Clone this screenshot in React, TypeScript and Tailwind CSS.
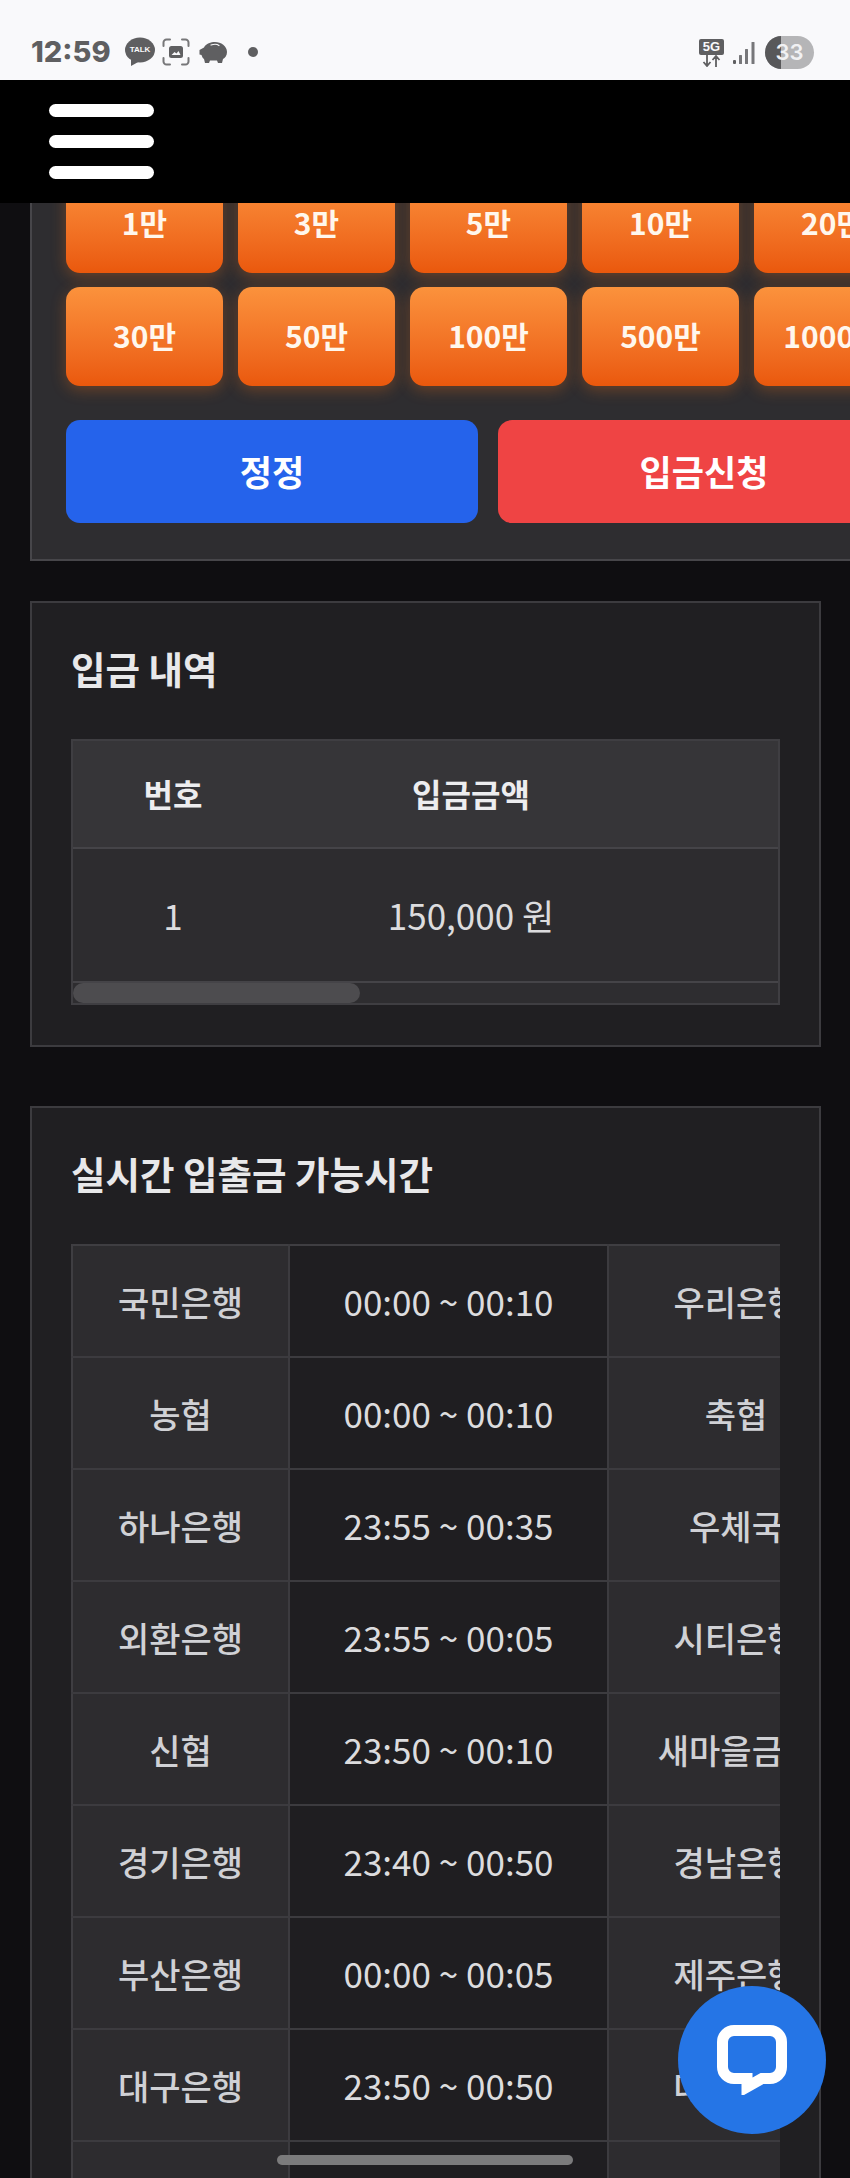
import React from 'react';

const row1 = ['1만', '3만', '5만', '10만', '20만'];
const row2 = ['30만', '50만', '100만', '500만', '1000만'];

const banks = [
  ['국민은행', '00:00 ~ 00:10', '우리은행'],
  ['농협', '00:00 ~ 00:10', '축협'],
  ['하나은행', '23:55 ~ 00:35', '우체국'],
  ['외환은행', '23:55 ~ 00:05', '시티은행'],
  ['신협', '23:50 ~ 00:10', '새마을금고'],
  ['경기은행', '23:40 ~ 00:50', '경남은행'],
  ['부산은행', '00:00 ~ 00:05', '제주은행'],
  ['대구은행', '23:50 ~ 00:50', '대신증권'],
  ['광주은행', '23:50 ~ 00:10', '전북은행'],
];

const StatusBar: React.FC = () => (
  <div className="h-[80px] shrink-0 bg-[#f9f9fb] flex items-start justify-between pt-[36px] pl-[31px] pr-[36px] text-[#5f5f61]">
    <div className="flex items-center">
      <span className="font-['Inter',sans-serif] text-[29px] leading-[32px] font-extrabold w-[94px]">12:59</span>
      {/* kakao talk */}
      <div className="relative w-[30px] h-[30px]">
        <svg viewBox="0 0 30 30" className="w-[30px] h-[30px]">
          <ellipse cx="15" cy="13" rx="15" ry="12.5" fill="#5f5f61" />
          <path d="M6 21 L6 29 L15 24 Z" fill="#5f5f61" />
        </svg>
        <span className="absolute left-0 top-[8px] w-[30px] text-center font-['Liberation_Sans',sans-serif] text-[8px] leading-[10px] font-bold text-[#f9f9fb]">TALK</span>
      </div>
      {/* screenshot */}
      <svg viewBox="0 0 28 28" className="w-[28px] h-[28px] ml-[7px]" fill="none">
        <path d="M1.500 8V4.500a3 3 0 0 1 3-3H8M20 1.500h3.500a3 3 0 0 1 3 3V8M26.500 20v3.500a3 3 0 0 1-3 3H20M8 26.500H4.500a3 3 0 0 1-3-3V20" stroke="#777779" strokeWidth="2" strokeLinecap="round" />
        <rect x="7" y="8" width="14" height="12" rx="2.500" fill="#5f5f61" />
        <path d="M9.500 17l3-3 2 1.500 2-2.500 2 4z" fill="#f9f9fb" />
      </svg>
      {/* piggy */}
      <svg viewBox="0 0 28 22" className="w-[28px] h-[22px] ml-[9px]">
        <path d="M0.500 9 L5 6.500 C7 2.500 12 1 16 1 C22 1 28 5 28 11 C28 14.500 26 17 24 18 L23 22 H19 L18 19.500 H11 L10 22 H6 L5 18 C3.500 17 3 15.500 2.500 14 L0.500 13.500 Z" fill="#5f5f61" />
        <path d="M12 4 C15 3 18 3 20 4.500" stroke="#f9f9fb" strokeWidth="1.200" fill="none" strokeLinecap="round" />
      </svg>
      <span className="w-[10px] h-[10px] rounded-full bg-[#5f5f61] ml-[21px]" />
    </div>
    <div className="flex items-center">
      {/* 5G */}
      <div className="flex flex-col items-center w-[25px]">
        <span className="w-[25px] h-[16px] rounded-[2px] bg-[#5f5f61] text-[#f9f9fb] font-['Liberation_Sans',sans-serif] text-[13px] leading-[16px] font-bold text-center">5G</span>
        <svg viewBox="0 0 25 12" className="w-[25px] h-[12px]" fill="none" stroke="#5f5f61" strokeWidth="1.800">
          <path d="M8 0v10M4.500 7l3.500 4 3.500-4M17 12V2M13.500 5L17 1l3.500 4" />
        </svg>
      </div>
      {/* signal */}
      <svg viewBox="0 0 22 24" className="w-[22px] h-[24px] ml-[9px]" fill="#5f5f61">
        <rect x="0" y="19" width="3" height="4" rx="1" />
        <rect x="6" y="14" width="3" height="9" rx="0.500" fill="#77777a" />
        <rect x="12" y="8" width="3" height="15" rx="0.500" fill="#77777a" />
        <rect x="18.500" y="1" width="3" height="22" rx="0.500" fill="#77777a" />
      </svg>
      {/* battery */}
      <div className="ml-[10px] relative w-[49px] h-[33px] rounded-full overflow-hidden bg-[#b5b5b7] flex items-center justify-center">
        <span className="absolute left-0 top-0 bottom-0 w-[16px] bg-[#58585a]" />
        <span className="relative font-['Inter',sans-serif] text-[22px] leading-[33px] font-semibold text-[#f1f1f3]">33</span>
      </div>
    </div>
  </div>
);

const Header: React.FC = () => (
  <div className="h-[123px] shrink-0 bg-black flex flex-col justify-center gap-[18px] pl-[49px] relative z-10">
    <span className="block w-[105px] h-[13px] rounded-full bg-white" />
    <span className="block w-[105px] h-[13px] rounded-full bg-white" />
    <span className="block w-[105px] h-[13px] rounded-full bg-white" />
  </div>
);

const AmountButton: React.FC<{ label: string }> = ({ label }) => (
  <button className="h-[99px] rounded-[14px] pb-[4px] bg-gradient-to-b from-[#fb923c] to-[#ea580c] text-[#fff7ed] text-[30px] font-semibold leading-none shadow-[0_4px_15px_rgba(249,115,22,0.3)]">
    {label}
  </button>
);

const App: React.FC = () => {
  return (
    <div className="w-[850px] h-[2178px] relative overflow-hidden flex flex-col bg-[#0f0e11] font-['Noto_Sans_CJK_KR',sans-serif]">
      <StatusBar />
      <Header />

      <div className="flex-1 overflow-hidden flex flex-col">
        {/* deposit form, scrolled under the header */}
        <div className="ml-[30px] w-[1100px] shrink-0 -mt-[29px] bg-[#2e2d30] border-l-2 border-b-2 border-[#47464a] pl-[34px] pb-[36px]">
          <div className="grid grid-cols-[repeat(5,157px)] gap-x-[15px] gap-y-[14px]">
            {row1.map((l) => (
              <AmountButton key={l} label={l} />
            ))}
            {row2.map((l) => (
              <AmountButton key={l} label={l} />
            ))}
          </div>
          <div className="flex gap-[20px] mt-[34px]">
            <button className="w-[412px] h-[103px] rounded-[14px] bg-[#2563eb] text-white text-[35px] font-bold">정정</button>
            <button className="w-[412px] h-[103px] rounded-[14px] bg-[#ef4444] text-white text-[35px] font-bold">입금신청</button>
          </div>
        </div>

        {/* deposit history */}
        <div className="ml-[30px] mt-[40px] w-[791px] h-[446px] shrink-0 bg-[#201f22] border-2 border-[#3c3b3f] pl-[39px] pr-[40px]">
          <h2 className="h-[136px] flex items-center pb-[6px] text-[37.5px] font-semibold text-[#e8e8ea]">입금 내역</h2>
          <div className="w-[709px] border-2 border-[#3f3e42] overflow-hidden">
            <table className="w-[1000px] table-fixed border-collapse">
              <thead>
                <tr className="h-[107px] bg-[#363538] border-b-2 border-[#454448]">
                  <th className="w-[200px] pb-[2px] text-[32px] font-semibold text-[#ededef]">번호</th>
                  <th className="w-[396px] pb-[2px] text-[32px] font-semibold text-[#ededef]">입금금액</th>
                  <th />
                </tr>
              </thead>
              <tbody>
                <tr className="h-[134px] bg-[#2d2c2f] border-b-2 border-[#454448]">
                  <td className="text-center text-[35px] font-normal text-[#dcdcde]">1</td>
                  <td className="text-center text-[35px] font-normal text-[#dcdcde]">150,000 원</td>
                  <td />
                </tr>
              </tbody>
            </table>
            <div className="h-[20px] bg-[#2e2d30]">
              <div className="w-[287px] h-[20px] rounded-full bg-[#4d4c4f]" />
            </div>
          </div>
        </div>

        {/* available hours */}
        <div className="ml-[30px] mt-[59px] w-[791px] shrink-0 bg-[#201f22] border-2 border-[#3c3b3f] pl-[39px] pr-[40px]">
          <h2 className="h-[136px] flex items-center pb-[6px] text-[37.5px] font-semibold text-[#e8e8ea]">실시간 입출금 가능시간</h2>
          <div className="w-[709px] overflow-hidden">
            <table className="w-[1000px] table-fixed border-collapse border-2 border-[#3f3e42]">
              <tbody>
                {banks.map((b) => (
                  <tr key={b[0]} className="h-[112px] border-b-2 border-[#3c3b3f]">
                    <td className="w-[217px] bg-[#2d2c2f] border-r-2 border-[#3c3b3f] text-center text-[34px] font-medium text-[#d0d1d5]">{b[0]}</td>
                    <td className="w-[319px] bg-[#1f1e21] border-r-2 border-[#3c3b3f] text-center text-[35px] font-normal text-[#dcdcde]">{b[1]}</td>
                    <td className="w-[256px] bg-[#2d2c2f] border-r-2 border-[#3c3b3f] text-center text-[34px] font-medium text-[#d0d1d5]">{b[2]}</td>
                    <td className="bg-[#1f1e21]" />
                  </tr>
                ))}
              </tbody>
            </table>
          </div>
        </div>
      </div>

      {/* chat button */}
      <button className="absolute left-[678px] top-[1986px] w-[148px] h-[148px] rounded-full bg-[#2575e6] flex items-center justify-center">
        <svg viewBox="0 0 70 70" className="w-[70px] h-[70px]" fill="none">
          <path d="M17 5.500H53A11.500 11.500 0 0 1 64.500 17V42A11.500 11.500 0 0 1 53 53.500H45L30 62V53.500H17A11.500 11.500 0 0 1 5.500 42V17A11.500 11.500 0 0 1 17 5.500Z" stroke="white" strokeWidth="11" strokeLinejoin="miter" />
        </svg>
      </button>

      {/* home indicator */}
      <div className="absolute left-[277px] top-[2155px] w-[296px] h-[10px] rounded-full bg-[#7b7b7c]" />
    </div>
  );
};

export default App;
